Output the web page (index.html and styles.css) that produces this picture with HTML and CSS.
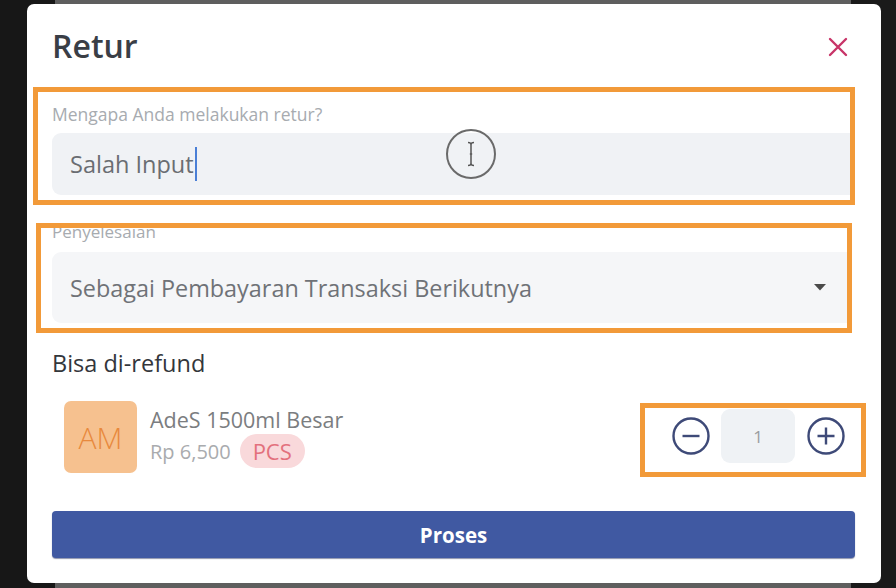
FILE: index.html
```html
<!DOCTYPE html>
<html lang="id">
<head>
<meta charset="utf-8">
<title>Retur</title>
<link rel="stylesheet" href="styles.css">
</head>
<body>
<div class="modal">
  <div class="header">
    <h1 class="title">Retur</h1>
    <svg class="close" width="20" height="20" viewBox="0 0 20 20"><path d="M2 2 L18 18 M18 2 L2 18" stroke="#c83468" stroke-width="2.4" stroke-linecap="round" fill="none"/></svg>
  </div>

  <div class="hl hl-reason">
    <div class="label">Mengapa Anda melakukan retur?</div>
    <div class="input"><span class="val">Salah Input</span><span class="caret"></span></div>
    <svg class="cursor" width="52" height="52" viewBox="0 0 52 52"><circle cx="26" cy="26" r="24" fill="none" stroke="#6a6a6a" stroke-width="2"/><path d="M23 14.5 Q26 14.5 26 16.5 Q26 14.5 29 14.5 M26 16.5 L26 35.5 M23 37.5 Q26 37.5 26 35.5 Q26 37.5 29 37.5" stroke="#555" stroke-width="1.5" fill="none"/><path d="M24.8 26 H27.2" stroke="#555" stroke-width="1.3"/></svg>
  </div>

  <div class="hl hl-settle">
    <div class="label label-clip">Penyelesaian</div>
    <div class="select">
      <span class="val">Sebagai Pembayaran Transaksi Berikutnya</span>
      <svg class="arrow" width="12" height="7" viewBox="0 0 12 7"><path d="M0 0 H12 L6 6.5 Z" fill="#4a4a4a"/></svg>
    </div>
  </div>

  <div class="section">Bisa di-refund</div>

  <div class="product">
    <div class="avatar">AM</div>
    <div class="info">
      <div class="name">AdeS 1500ml Besar</div>
      <div class="meta"><span class="price">Rp 6,500</span><span class="badge">PCS</span></div>
    </div>
    <div class="hl hl-qty">
      <svg class="circ" width="38" height="38" viewBox="0 0 38 38"><circle cx="19" cy="19" r="17.5" fill="none" stroke="#3e4a78" stroke-width="2.4"/><path d="M10.5 19 H27.5" stroke="#3e4a78" stroke-width="2.4"/></svg>
      <div class="qty">1</div>
      <svg class="circ" width="38" height="38" viewBox="0 0 38 38"><circle cx="19" cy="19" r="17.5" fill="none" stroke="#3e4a78" stroke-width="2.4"/><path d="M10.5 19 H27.5 M19 10.5 V27.5" stroke="#3e4a78" stroke-width="2.4"/></svg>
    </div>
  </div>

  <button class="btn">Proses</button>
</div>
</body>
</html>
```

FILE: styles.css
```css
* { box-sizing: border-box; }
html, body { margin: 0; padding: 0; }
body {
  width: 896px;
  height: 588px;
  overflow: hidden;
  font-family: "Open Sans", "Noto Sans", sans-serif;
  background: linear-gradient(to right, #171717 0, #171717 55px, #5e5e5e 55px, #5e5e5e 851px, #1a1a1a 851px);
  padding-top: 4px;
  padding-left: 27px;
}
.modal {
  width: 854px;
  height: 579px;
  background: #fff;
  border-radius: 7px;
  display: flex;
  flex-direction: column;
  position: relative;
}
.header {
  height: 83px;
  display: flex;
  align-items: center;
  justify-content: space-between;
  padding: 0 33px 0 25px;
}
.title {
  margin: 0;
  font-size: 32px;
  font-weight: 600;
  color: #3a3e46;
  line-height: 40px;
}
.close { display: block; margin-top: 2px; }

.hl { border: 5px solid #f29a39; }
.hl-reason {
  margin-left: 6px;
  width: 822px;
  height: 118px;
  padding: 11px 0 0 14px;
  position: relative;
}
.label {
  font-size: 17.5px;
  line-height: 22px;
  color: #a7abb0;
  height: 22px;
  white-space: nowrap;
}
.input {
  margin-top: 8px;
  height: 62px;
  background: #f0f2f5;
  border-radius: 9px 0 0 9px;
  display: flex;
  align-items: center;
  padding-left: 18px;
  font-size: 23.5px;
  color: #6a6d72;
}
.caret {
  display: inline-block;
  width: 2px;
  height: 34px;
  background: #4a7fd6;
  margin-left: 1px;
}
.cursor {
  position: absolute;
  left: 407px;
  top: 36px;
}
.hl-settle {
  margin-top: 18px;
  margin-left: 9px;
  width: 816px;
  height: 110px;
  padding: 0 0 0 11px;
  overflow: hidden;
}
.label-clip { margin-top: -7px; height: 22px; font-size: 17px; }
.select {
  margin-top: 9px;
  height: 71px;
  background: #f5f6f8;
  border-radius: 9px 0 0 9px;
  display: flex;
  align-items: center;
  justify-content: space-between;
  padding: 0 21px 0 18px;
  font-size: 23.4px;
  color: #6f7277;
}
.arrow { display: block; }
.section {
  margin-top: 16px;
  padding-left: 25px;
  font-size: 23.5px;
  line-height: 28px;
  font-weight: 500;
  color: #33363b;
}
.product {
  margin-top: 24px;
  display: flex;
  align-items: flex-start;
  padding: 0 15px 0 37px;
}
.avatar {
  width: 73px;
  height: 72px;
  border-radius: 7px;
  background: #f6c18f;
  color: #e8893d;
  font-size: 30px;
  font-weight: 300;
  display: flex;
  align-items: center;
  justify-content: center;
}
.info {
  margin-left: 13px;
  padding-top: 5px;
}
.name {
  font-size: 21.5px;
  line-height: 28px;
  color: #7b7d80;
}
.meta {
  display: flex;
  align-items: center;
  gap: 9px;
}
.price {
  font-size: 20px;
  color: #a9abae;
}
.badge {
  height: 34px;
  width: 65px;
  border-radius: 17px;
  background: #f9d9db;
  color: #e3717d;
  font-size: 22px;
  display: flex;
  align-items: center;
  justify-content: center;
}
.hl-qty {
  margin-left: auto;
  margin-top: 2px;
  width: 226px;
  height: 74px;
  display: flex;
  align-items: center;
  padding: 0 16px 8px 27px;
}
.circ { display: block; }
.qty {
  margin: 0 12px 0 11px;
  width: 74px;
  height: 54px;
  border-radius: 9px;
  background: #eff2f5;
  color: #9a9ca0;
  font-size: 17px;
  display: flex;
  align-items: center;
  justify-content: center;
}
.btn {
  margin: 34px 0 0 25px;
  width: 803px;
  height: 47px;
  border: none;
  border-radius: 4px;
  background: #4059a2;
  color: #fff;
  font-family: "Open Sans", "Noto Sans", sans-serif;
  font-size: 20.5px;
  font-weight: 700;
  box-shadow: 0 1px 1px rgba(30,40,90,0.5);
}
```
